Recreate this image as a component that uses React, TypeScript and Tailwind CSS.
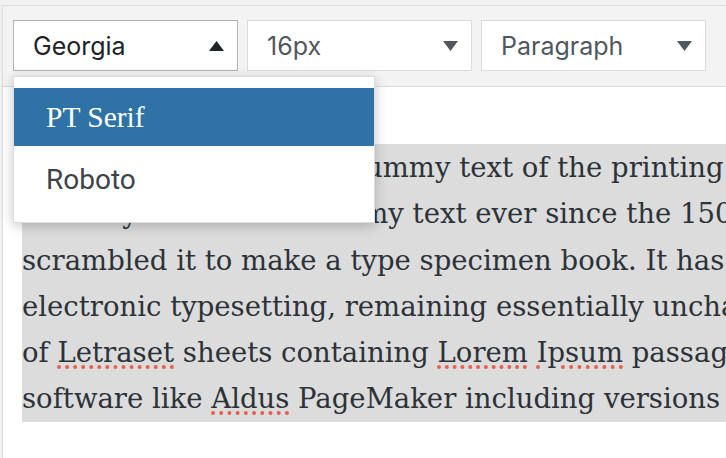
import { ReactNode } from 'react';

function Caret({ up, dark }: { up?: boolean; dark?: boolean }) {
    return (
        <svg width="15" height="10" viewBox="0 0 15 10" className={dark ? 'text-[#1d2327]' : 'text-[#50575e]'}>
            {up ? <path d="M7.5 0 15 10H0z" fill="currentColor" /> : <path d="M0 0h15L7.5 10z" fill="currentColor" />}
        </svg>
    );
}

function Select({ label, open }: { label: string; open?: boolean }) {
    return (
        <div
            className={
                'w-[225px] h-[51px] bg-white border flex items-center justify-between pl-[19px] pr-[13px] ' +
                (open ? 'border-[#b0b3b6] text-[#1d2327]' : 'border-[#dcdcde] text-[#50575e]')
            }
        >
            <span className="pt-[3px] text-[25px] font-['Inter',sans-serif]">{label}</span>
            <Caret up={open} dark={open} />
        </div>
    );
}

function Typo({ children }: { children: ReactNode }) {
    return (
        <span className="underline decoration-dotted decoration-[#e6604f] decoration-[4px] underline-offset-[3px]">
            {children}
        </span>
    );
}

export default function App() {
    return (
        <div className="relative w-[726px] h-[458px] overflow-hidden bg-[#f1f1f1] pt-[5px] pl-[2px]">
            <div className="w-[740px] h-[470px] bg-white border border-[#dcdcde]">
                <div className="h-[81px] bg-[#f3f3f3] border-b border-[#dcdcde] pl-[10px] pt-[14px] flex gap-[9px]">
                    <Select label="Georgia" open />
                    <Select label="16px" />
                    <Select label="Paragraph" />
                </div>
                <div className="pl-[19px] pt-[57px]">
                    <div className="bg-[#dcdcdc] text-[#2c3338] text-[27.5px] leading-[46.3px] whitespace-nowrap overflow-hidden font-['DejaVu_Serif',serif]">
                        <div>Lorem Ipsum is simply dummy text of the printing and typesetting industry. Lorem Ipsum has been the</div>
                        <div>industry's standard dummy text ever since the 1500s, when an unknown printer took a galley of type and</div>
                        <div>scrambled it to make a type specimen book. It has survived not only five centuries, but also the leap into</div>
                        <div>electronic typesetting, remaining essentially unchanged. It was popularised in the 1960s with the release</div>
                        <div>of <Typo>Letraset</Typo> sheets containing <Typo>Lorem</Typo> <Typo>Ipsum</Typo> passages, and more recently with desktop publishing</div>
                        <div>software like <Typo>Aldus</Typo> PageMaker including versions of Lorem Ipsum.</div>
                    </div>
                </div>
            </div>

            <div className="absolute left-[13px] top-[76px] w-[362px] bg-white border border-[#dcdcde] shadow-[0_3px_12px_rgba(0,0,0,0.22)] pt-[11px] pb-[13px]">
                <div className="h-[58px] bg-[#2e72a6] text-white flex items-center pl-[32px] text-[29.5px] font-['Liberation_Serif',serif]">
                    PT Serif
                </div>
                <div className="h-[63px] flex items-center pl-[32px] pt-[5px] text-[28px] text-[#3c434a] font-['Roboto',sans-serif]">
                    Roboto
                </div>
            </div>
        </div>
    );
}
